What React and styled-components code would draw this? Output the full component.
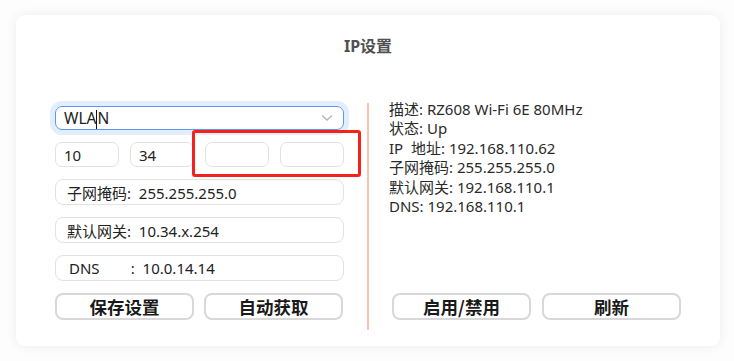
import React from "react";
import styled, { createGlobalStyle } from "styled-components";

const Global = createGlobalStyle`
  html, body { margin: 0; padding: 0; background: #ffffff; }
  body { font-family: "Noto Sans", "Noto Sans CJK SC", sans-serif; }
`;

const Page = styled.div`
  width: 734px;
  height: 361px;
  box-sizing: border-box;
  padding: 15px 14px 15px 16px;
  background: #fdfdfd;
`;

const Card = styled.div`
  width: 704px;
  height: 331px;
  box-sizing: border-box;
  background: #ffffff;
  border-radius: 9px;
  box-shadow: 0 0 12px rgba(0, 0, 0, 0.07);
  padding: 21px 0 0 39px;
`;

const Title = styled.div`
  height: 20px;
  line-height: 20px;
  text-align: center;
  margin-left: -39px;
  font-size: 16px;
  font-weight: 700;
  color: #505050;
`;

const Body = styled.div`
  display: flex;
  margin-top: 50px;
`;

const LeftCol = styled.div`
  width: 289px;
  display: flex;
  flex-direction: column;
  gap: 12px;
`;

const Select = styled.div`
  position: relative;
  height: 24px;
  box-sizing: border-box;
  border: 1.5px solid #5a98f2;
  border-radius: 7px;
  box-shadow: 0 0 0 5px #e2edfd;
  display: flex;
  align-items: center;
  padding: 0 8px 0 8px;
  font-size: 15.5px;
  color: #222;
`;

const Caret = styled.span`
  display: inline-block;
  width: 0;
  height: 19px;
  border-left: 1px solid #111;
  vertical-align: middle;
`;

const Chevron = styled.svg`
  margin-left: auto;
  margin-right: 2px;
`;

const IpRow = styled.div`
  position: relative;
  display: grid;
  grid-template-columns: repeat(4, 64px);
  justify-content: space-between;
`;

const IpBox = styled.div`
  height: 25px;
  box-sizing: border-box;
  border: 1px solid #e2e2e2;
  border-radius: 7px;
  padding-left: 8px;
  display: flex;
  align-items: center;
  font-size: 15px;
  color: #222;
`;

const Highlight = styled.div`
  position: absolute;
  left: 137px;
  top: -12px;
  width: 169px;
  height: 47px;
  box-sizing: border-box;
  border: 3px solid #f5211d;
  border-radius: 3px;
  pointer-events: none;
`;

const Field = styled.div`
  height: 26px;
  box-sizing: border-box;
  border: 1px solid #e2e2e2;
  border-radius: 8px;
  padding-left: ${(p) => p.$pad || 11}px;
  display: flex;
  align-items: center;
  font-size: 15px;
  color: #222;
  white-space: pre;
`;

const ButtonRow = styled.div`
  display: flex;
  gap: ${(p) => p.$gap}px;
  margin-left: ${(p) => p.$offset || 0}px;
`;

const Button = styled.button`
  width: ${(p) => p.$w}px;
  height: 27px;
  box-sizing: border-box;
  border: 2.5px solid #d8d8d8;
  border-radius: 8px;
  background: #ffffff;
  font-family: "Noto Sans CJK SC", sans-serif;
  font-size: 17.5px;
  font-weight: 700;
  color: #1a1a1a;
  padding: 0;
  display: flex;
  align-items: center;
  justify-content: center;
  line-height: 1;
`;

const Divider = styled.div`
  width: 2px;
  background: #f8c4ae;
  margin: -3px 0 -10px 23px;
`;

const RightCol = styled.div`
  flex: 1;
  padding-left: 20px;
  display: flex;
  flex-direction: column;
  justify-content: space-between;
`;

const Info = styled.div`
  margin-top: -6px;
  font-size: 15px;
  line-height: 19.4px;
  color: #2a2a2a;
`;

const InfoLine = styled.div`
  white-space: pre;
`;

export default function App() {
  const info = [
    "描述: RZ608 Wi-Fi 6E 80MHz",
    "状态: Up",
    "IP  地址: 192.168.110.62",
    "子网掩码: 255.255.255.0",
    "默认网关: 192.168.110.1",
    "DNS: 192.168.110.1",
  ];
  return (
    <>
      <Global />
      <Page>
        <Card>
          <Title>IP设置</Title>
          <Body>
            <LeftCol>
              <Select>
                <span>
                  WLA<Caret />N
                </span>
                <Chevron width="12" height="8" viewBox="0 0 12 8">
                  <polyline points="1,1.5 6,6 11,1.5" fill="none" stroke="#b5b5b5" strokeWidth="1.4" />
                </Chevron>
              </Select>
              <IpRow>
                <IpBox>10</IpBox>
                <IpBox>34</IpBox>
                <IpBox />
                <IpBox />
                <Highlight />
              </IpRow>
              <Field>子网掩码:  255.255.255.0</Field>
              <Field>默认网关:  10.34.x.254</Field>
              <Field $pad={13}>DNS        :  10.0.14.14</Field>
              <ButtonRow $gap={10}>
                <Button $w={139}>保存设置</Button>
                <Button $w={139}>自动获取</Button>
              </ButtonRow>
            </LeftCol>
            <Divider />
            <RightCol>
              <Info>
                {info.map((t) => (
                  <InfoLine key={t}>{t}</InfoLine>
                ))}
              </Info>
              <ButtonRow $gap={11} $offset={3}>
                <Button $w={139}>启用/禁用</Button>
                <Button $w={139}>刷新</Button>
              </ButtonRow>
            </RightCol>
          </Body>
        </Card>
      </Page>
    </>
  );
}
